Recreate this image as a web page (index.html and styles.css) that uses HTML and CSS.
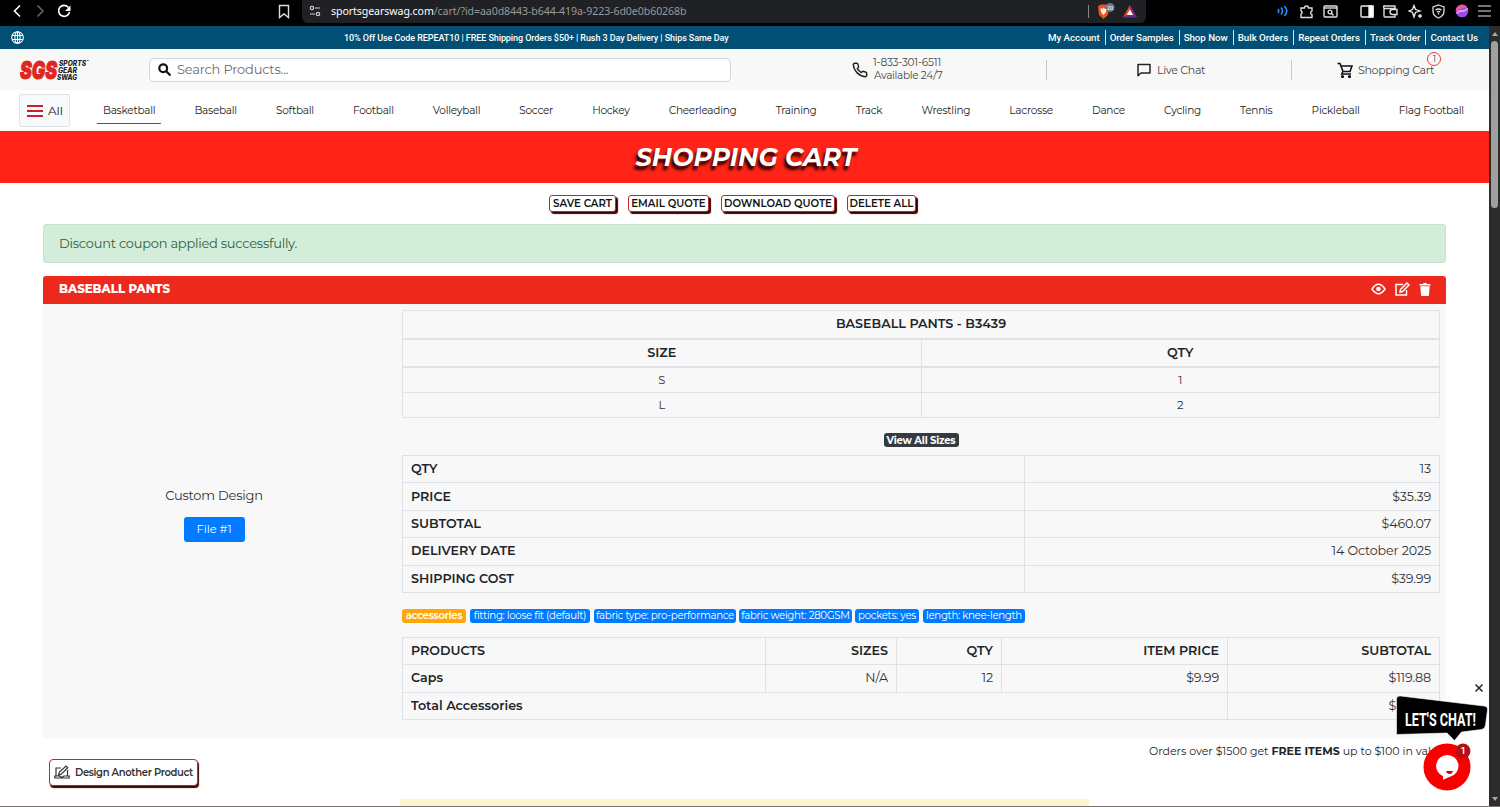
FILE: index.html
```html
<!DOCTYPE html>
<html lang="en">
<head>
  <meta charset="UTF-8">
  <title>Shopping Cart - Sports Gear Swag</title>
  <meta name="viewport" content="width=device-width, initial-scale=1.0">
  <link rel="stylesheet" href="styles.css">
</head>
<body>
  <!-- browser bar -->
  <div class="browser">
    <div class="browser-nav">
      <svg width="64" height="16" viewBox="0 0 64 16" fill="none" stroke="#fff" stroke-width="1.6"><path d="M11 2.500L5.500 8l5.500 5.500"/><path stroke="#666" d="M28.500 2.500L34 8 28.500 13.500"/><path d="M59.500 4.500A5.500 5.500 0 1 0 60.500 9"/><path fill="#fff" stroke="none" d="M61.500 2.500v5.500H56z"/></svg>
    </div>
    <svg class="bookmark" width="12" height="15" viewBox="0 0 12 15" fill="none" stroke="#ddd" stroke-width="1.400"><path d="M1.500 1.500h9v12L6 10l-4.500 3.500z"/></svg>
    <div class="url-bar">
      <svg width="12" height="12" viewBox="0 0 12 12" fill="none" stroke="#ccc" stroke-width="1.200"><circle cx="3" cy="3" r="1.700"/><path d="M6 3h5M1 9h5"/><circle cx="9" cy="9" r="1.700"/></svg>
      <span class="url"><b>sportsgearswag.com</b>/cart/?id=aa0d8443-b644-419a-9223-6d0e0b60268b</span>
      <span class="url-sep"></span>
      <svg class="shield" width="20" height="18" viewBox="0 0 20 18"><path fill="#f4501e" d="M2 4l3-1.500h5L13 4l-1 9-4.500 4L3 13z"/><path fill="#fff" d="M4.500 6l2 1 1-1.500L9 7l2-1-1 4-2.500 3L5 10z"/><circle cx="14" cy="5.500" r="4.500" fill="#70757d"/><text x="14" y="8" class="shield-count">20</text></svg>
      <svg width="14" height="13" viewBox="0 0 14 13"><path fill="#f04a28" d="M7 0L0 12.500 7 8z"/><path fill="#9e1f63" d="M7 0l7 12.500L7 8z"/><path fill="#662d91" d="M0 12.500h14L7 8z"/><path fill="#fff" d="M7 4.500L3.800 10h6.400z"/></svg>
    </div>
    <div class="browser-tools">
      <svg width="12" height="12" viewBox="0 0 12 12" fill="none" stroke="#1d8cf5" stroke-width="1.700"><path d="M1 4q1.500 2 0 4M4 2.500q3 3.500 0 7M7.500 1q4.500 5 0 10"/></svg>
      <svg width="15" height="15" viewBox="0 0 15 15" fill="none" stroke="#ddd" stroke-width="1.400"><path d="M2 4h3.500a2 2 0 1 1 4 0H13v3a1.800 1.800 0 0 0 0 3.500v3H2v-3.300a1.700 1.700 0 0 0 0-3.200z"/></svg>
      <svg width="15" height="13" viewBox="0 0 15 13" fill="none" stroke="#ddd" stroke-width="1.400"><rect x="1" y="1" width="13" height="11" rx="1"/><path d="M1 3h13"/><circle cx="7" cy="7" r="1.900"/><path d="M8.500 8.500l2 2"/></svg>
      <svg class="panel" width="14" height="13" viewBox="0 0 14 13" fill="none" stroke="#eee" stroke-width="1.400"><rect x="1" y="1" width="12" height="11" rx="1"/><path fill="#fff" d="M9 1h4v11H9z"/></svg>
      <svg width="15" height="13" viewBox="0 0 15 13" fill="none" stroke="#ddd" stroke-width="1.400"><path d="M12 4V1H2a1 1 0 0 0-1 2v8q0 1 1 1h10V9.500M1 3.500h12M14 4.500H9.500a2.400 2.400 0 0 0 0 5H14z"/></svg>
      <svg width="15" height="15" viewBox="0 0 15 15" fill="none" stroke="#eee" stroke-width="1.300"><path d="M6 1.500l1.500 4L12 7l-4.500 1.500L6 13 4.500 8.500 1 7l3.500-1.500z"/><path d="M12 10v4M10 12h4"/></svg>
      <svg width="13" height="15" viewBox="0 0 13 15" fill="none" stroke="#ddd" stroke-width="1.300"><path d="M6.500 1L12 3v4.500q0 4-5.500 6.500Q1 11.500 1 7.500V3z"/><path d="M3.500 6q3-2 6 0M4.800 8q1.700-1 3.400 0M6.500 9v1.500"/></svg>
      <svg width="14" height="14" viewBox="0 0 14 14"><circle cx="7" cy="7" r="6.300" fill="#9c4bea"/><path fill="#f0559a" d="M1 5A6.300 6.300 0 0 1 12 3Q7 4 1 8z"/><path d="M1.500 9.500Q5 6 7 7t5.500-2.500" stroke="#fff" stroke-width="1" fill="none"/></svg>
      <svg width="13" height="12" viewBox="0 0 13 12" stroke="#999" stroke-width="1.300"><path d="M0 1h13M0 6h13M0 11h13"/></svg>
    </div>
  </div>

  <div class="window">
    <div class="page">
      <div class="topbar">
        <svg class="globe" width="13" height="13" viewBox="0 0 13 13" fill="none" stroke="#fff" stroke-width="1.100"><circle cx="6.500" cy="6.500" r="5.800"/><ellipse cx="6.500" cy="6.500" rx="2.600" ry="5.800"/><path d="M6.500 .7v11.600M1.200 4.500h10.600M1.200 8.500h10.600"/></svg>
        <div class="promo">10% Off Use Code REPEAT10 | FREE Shipping Orders $50+ | Rush 3 Day Delivery | Ships Same Day</div>
        <div class="top-links">
          <a>My Account</a><a>Order Samples</a><a>Shop Now</a><a>Bulk Orders</a><a>Repeat Orders</a><a>Track Order</a><a>Contact Us</a>
        </div>
      </div>

      <header class="header">
        <svg class="logo" width="74" height="26" viewBox="0 0 74 26">
          <text class="logo-sgs" x="1" y="22" textLength="37" lengthAdjust="spacingAndGlyphs">SGS</text>
          <g class="logo-words"><text x="40" y="9" textLength="27" lengthAdjust="spacingAndGlyphs">SPORTS</text><text x="39" y="16" textLength="19" lengthAdjust="spacingAndGlyphs">GEAR</text><text x="38" y="23" textLength="20" lengthAdjust="spacingAndGlyphs">SWAG</text><text class="tm" x="67" y="6">™</text></g>
        </svg>
        <div class="search">
          <svg width="13" height="13" viewBox="0 0 13 13" fill="none" stroke="#111" stroke-width="2.200"><circle cx="5.200" cy="5.200" r="3.900"/><path d="M8 8l4.500 4.500"/></svg>
          <span>Search Products...</span>
        </div>
        <div class="contact">
          <svg width="16" height="16" viewBox="0 0 24 24" fill="none" stroke="#222" stroke-width="2.200" stroke-linejoin="round"><path d="M22 17v3a2 2 0 0 1-2.200 2A19.800 19.800 0 0 1 2 4.200 2 2 0 0 1 4 2h3a2 2 0 0 1 2 1.700q.3 1.500.8 2.800a2 2 0 0 1-.5 2.100L8 9.900a16 16 0 0 0 6 6l1.300-1.300a2 2 0 0 1 2.100-.4q1.300.5 2.800.7A2 2 0 0 1 22 17z"/></svg>
          <p>1-833-301-6511<br><span>Available 24/7</span></p>
        </div>
        <div class="chat-link">
          <svg width="14" height="14" viewBox="0 0 14 14" fill="none" stroke="#222" stroke-width="1.500" stroke-linejoin="round"><path d="M1 1.500h12v8.500H4L1 12.800z"/></svg>
          <span>Live Chat</span>
        </div>
        <div class="cart-link">
          <svg width="16" height="16" viewBox="0 0 16 16" fill="none" stroke="#111" stroke-width="1.600"><path d="M.5 1.500H3L6 9.500h7L15 4H4M6 9.500L4.700 12H14"/><circle cx="5.500" cy="14.500" r=".8" fill="#111"/><circle cx="12.500" cy="14.500" r=".8" fill="#111"/></svg>
          <span>Shopping Cart</span>
          <i class="cart-count">1</i>
        </div>
      </header>

      <nav class="nav">
        <div class="all-btn"><svg width="16" height="12" viewBox="0 0 16 12" stroke="#c8202c" stroke-width="2"><path d="M0 1h16M0 6h16M0 11h16"/></svg>All</div>
        <div class="nav-list">
          <a class="active">Basketball</a><a>Baseball</a><a>Softball</a><a>Football</a><a>Volleyball</a><a>Soccer</a><a>Hockey</a><a>Cheerleading</a><a>Training</a><a>Track</a><a>Wrestling</a><a>Lacrosse</a><a>Dance</a><a>Cycling</a><a>Tennis</a><a>Pickleball</a><a>Flag Football</a>
        </div>
      </nav>

      <h1 class="banner"><span>SHOPPING CART</span></h1>

      <div class="actions">
        <button class="w-save">SAVE CART</button>
        <button class="w-email">EMAIL QUOTE</button>
        <button class="w-download">DOWNLOAD QUOTE</button>
        <button class="w-delete">DELETE ALL</button>
      </div>

      <main class="container">
        <div class="alert">Discount coupon applied successfully.</div>

        <section class="card">
          <div class="card-header">
            <h2>BASEBALL PANTS</h2>
            <div class="card-icons">
              <svg width="15" height="12" viewBox="0 0 15 12" fill="none" stroke="#fff" stroke-width="1.500"><path d="M1 6q6.500-9.500 13 0-6.500 9.500-13 0z"/><circle cx="7.500" cy="6" r="2.300" fill="#fff" stroke="none"/></svg>
              <svg width="15" height="14" viewBox="0 0 15 14" fill="none" stroke="#fff" stroke-width="1.500"><path d="M8 2.500H1V13h10.500V8"/><path d="M5.500 7.500L12 1l2 2-6.500 6.500-2.500.5z"/></svg>
              <svg width="12" height="13" viewBox="0 0 12 13" fill="#fff"><path d="M.5 1H4l.5-1h3L8 1h3.500v1.500H.5zM1.300 3.300h9.400L10 12q0 1-1 1H3q-1 0-1-1z"/></svg>
            </div>
          </div>
          <div class="card-body">
            <div class="design">
              <p>Custom Design</p>
              <button>File #1</button>
            </div>
            <div class="details">
              <table class="sizes">
                <tr class="heavy"><th colspan="2">BASEBALL PANTS - B3439</th></tr>
                <tr class="heavy"><th>SIZE</th><th>QTY</th></tr>
                <tr><td>S</td><td>1</td></tr>
                <tr><td>L</td><td>2</td></tr>
              </table>
              <div class="view-all"><span>View All Sizes</span></div>
              <table class="summary">
                <tr><th>QTY</th><td>13</td></tr>
                <tr><th>PRICE</th><td>$35.39</td></tr>
                <tr><th>SUBTOTAL</th><td>$460.07</td></tr>
                <tr><th>DELIVERY DATE</th><td>14 October 2025</td></tr>
                <tr><th>SHIPPING COST</th><td>$39.99</td></tr>
              </table>
              <div class="badges">
                <span class="orange w-acc">accessories</span>
                <span class="w-fit">fitting: loose fit (default)</span>
                <span class="w-type">fabric type: pro-performance</span>
                <span class="w-weight">fabric weight: 280GSM</span>
                <span class="w-pockets">pockets: yes</span>
                <span class="w-length">length: knee-length</span>
              </div>
              <table class="products">
                <colgroup><col class="c1"><col class="c2"><col class="c3"><col class="c4"><col class="c5"></colgroup>
                <tr><th>PRODUCTS</th><th>SIZES</th><th>QTY</th><th>ITEM PRICE</th><th>SUBTOTAL</th></tr>
                <tr><th>Caps</th><td>N/A</td><td>12</td><td>$9.99</td><td>$119.88</td></tr>
                <tr><th colspan="4">Total Accessories</th><td>$119.88</td></tr>
              </table>
            </div>
          </div>
        </section>

        <div class="below">
          <button class="another">
            <svg width="16" height="14" viewBox="0 0 16 14" fill="none" stroke="#333" stroke-width="1.200"><path d="M7 3H2v8M13.500 5v6M.8 11h5l1 1h2l1-1h5.400v2H.8zM4.500 10l1-3L12 1l1.800 1.800L7.500 9z"/></svg>
            Design Another Product
          </button>
          <p class="offer">Orders over $1500 get <b>FREE ITEMS</b> up to $100 in value</p>
        </div>
        <div class="notice"></div>
      </main>

      <div class="chat">
        <svg width="94" height="112" viewBox="0 0 94 112">
          <path d="M80.500 5.500l7 7m0-7l-7 7" stroke="#222" stroke-width="1.500"/>
          <path fill="#000" stroke="#fff" stroke-width=".6" d="M1.500 20q0-3.500 4-3L89 27q4 .5 3.500 4l-2 15q-.5 4-4 4.500l-20 2.500-7 8.500L52 54l-50.500 1.500z"/>
          <text class="chat-text" x="10" y="46.500" textLength="71" lengthAdjust="spacingAndGlyphs">LET'S CHAT!</text>
          <circle cx="52" cy="88" r="23.500" fill="#f80000"/>
          <path fill="#fff" d="M52 76a11 11 0 0 1 3 21.700l-7 3v-3.500A11 11 0 0 1 52 76z"/>
          <path fill="#d00" d="M51 92h7q-.8 3-3.500 3T51 92z"/>
          <circle cx="68" cy="72" r="7.500" fill="#b51218"/>
          <text class="chat-count" x="68" y="75">1</text>
        </svg>
      </div>
    </div>

    <div class="scrollbar">
      <span class="arrow-up"></span>
      <span class="thumb"></span>
      <span class="arrow-down"></span>
    </div>
  </div>
  <div class="window-edge"></div>
</body>
</html>
```
FILE: styles.css
```css
* {
  box-sizing: border-box;
}
body {
  margin: 0;
  width: 1500px;
  height: 807px;
  overflow: hidden;
  display: flex;
  flex-direction: column;
  background: #fff;
  color: #212529;
  font-family: Montserrat, Inter, sans-serif;
}
h1, h2, p {
  margin: 0;
}
svg {
  display: block;
  flex: none;
}
button {
  font-family: inherit;
  padding: 0;
  white-space: nowrap;
}

/* browser bar */
.browser {
  height: 26px;
  flex: none;
  background: #000;
  display: flex;
  align-items: center;
  padding: 0 9px 4px;
}
.browser-nav {
  width: 269px;
}
.url-bar {
  margin-left: 12px;
  width: 844px;
  height: 23px;
  background: #202124;
  border-radius: 0 0 6px 6px;
  display: flex;
  align-items: center;
  padding: 0 9px 0 7px;
}
.url {
  margin-left: 10px;
  font: 10.600px "Noto Sans", sans-serif;
  color: #999;
  letter-spacing: -0.08px;
}
.url b {
  color: #fff;
  font-weight: 400;
}
.url-sep {
  width: 1px;
  height: 13px;
  background: #888;
  margin-left: auto;
}
.shield {
  margin: 0 7px 0 7px;
}
.shield-count {
  font: 6px Roboto, sans-serif;
  fill: #fff;
  text-anchor: middle;
}
.browser-tools {
  margin-left: auto;
  display: flex;
  align-items: center;
  gap: 9.500px;
}
.browser-tools .panel {
  margin-left: 12px;
}

.window {
  flex: 1;
  display: flex;
  min-height: 0;
}
.page {
  width: 1489px;
  position: relative;
  overflow: hidden;
}

/* top bar */
.topbar {
  height: 23px;
  background: #014f74;
  color: #fff;
  display: flex;
  align-items: center;
  padding: 0 11px;
  font: 500 9px Roboto, sans-serif;
}
.promo {
  margin-left: 320px;
  letter-spacing: -0.080px;
  white-space: nowrap;
}
.top-links {
  margin-left: auto;
  display: flex;
  font-size: 9.750px;
  letter-spacing: -0.04px;
}
.top-links a {
  line-height: 15px;
  padding: 0 5px 0 4px;
  border-right: 1px solid #d8e4ea;
  white-space: nowrap;
}
.top-links a:last-child {
  border: 0;
  padding-right: 0;
}

/* header */
.header {
  height: 41px;
  background: #f8f8f8;
  display: flex;
  align-items: center;
  padding-left: 19px;
  color: #484848;
  font-size: 11px;
}
.logo {
  overflow: visible;
}
.logo-sgs {
  font: italic 900 25px Inter, sans-serif;
  fill: #e1251f;
  stroke: #e1251f;
  stroke-width: 1px;
}
.logo-words {
  font: italic 800 7px Inter, sans-serif;
  fill: #222;
}
.logo-words .tm {
  font-size: 4px;
}
.search {
  margin-left: 56px;
  width: 582px;
  height: 24px;
  background: #fff;
  border: 1px solid #d4d4de;
  border-radius: 5px;
  display: flex;
  align-items: center;
  gap: 6px;
  padding: 0 0 1px 8px;
  font-size: 13px;
  letter-spacing: -0.2px;
  color: #6c6c74;
}
.contact {
  margin-left: 121px;
  width: 195px;
  height: 20px;
  border-right: 1px solid #c8c8c8;
  display: flex;
  align-items: center;
  gap: 5px;
  font-size: 10.500px;
  letter-spacing: -0.2px;
  line-height: 13px;
}
.contact p {
  margin-top: -1px;
}
.contact span {
  padding-left: 1px;
  letter-spacing: -0.3px;
}
.chat-link {
  width: 245px;
  height: 20px;
  border-right: 1px solid #c8c8c8;
  display: flex;
  align-items: center;
  gap: 6px;
  padding-left: 90px;
  letter-spacing: -0.3px;
}
.cart-link {
  position: relative;
  display: flex;
  align-items: center;
  gap: 5px;
  margin-left: 45px;
  letter-spacing: -0.3px;
}
.cart-count {
  position: absolute;
  right: -7px;
  top: -10px;
  width: 14px;
  height: 14px;
  border: 1px solid #ee3a30;
  border-radius: 50%;
  font-style: normal;
  font-size: 9px;
  line-height: 12px;
  text-align: center;
}

/* categories */
.nav {
  height: 41px;
  display: flex;
  align-items: center;
  padding: 0 19px;
}
.all-btn {
  width: 51px;
  height: 33px;
  background: #f8f9fa;
  border: 1px solid #dfe2e8;
  border-radius: 2px;
  display: flex;
  align-items: center;
  gap: 5px;
  padding-left: 7px;
  font-size: 12px;
  color: #222;
}
.nav-list {
  flex: 1;
  margin-left: 27px;
  display: flex;
  justify-content: space-between;
}
.nav-list a {
  padding: 0 6px;
  height: 27px;
  line-height: 28px;
  font-size: 10.500px;
  color: #222;
  letter-spacing: -0.25px;
  white-space: nowrap;
}
.nav-list .active {
  border-bottom: 1px solid #555;
}

.banner {
  height: 52px;
  background: #ff2318;
  color: #fff;
  text-align: center;
  font-size: 25.200px;
  line-height: 52px;
  font-weight: 700;
  font-style: italic;
  text-shadow: -2px 4px 3px #200;
}
.banner span {
  padding-left: 3px;
}

.actions {
  display: flex;
  padding-left: 549px;
  padding-top: 12px;
  gap: 12px;
  height: 41px;
}
.actions button {
  height: 17px;
  border: 1px solid #b92a30;
  border-radius: 3px;
  background: #fff;
  box-shadow: 2px 2px 1px #3a0000;
  font-size: 10.200px;
  line-height: 14px;
  font-weight: 600;
  color: #111;
}
.w-save { width: 67px; }
.w-email { width: 81px; }
.w-download { width: 114px; }
.w-delete { width: 69px; }

.container {
  margin: 0 43px;
}
.alert {
  height: 39px;
  background: #d4edda;
  border: 1px solid #c3e6cb;
  border-radius: 3px;
  color: #2c643e;
  font-size: 13px;
  letter-spacing: -0.25px;
  line-height: 36px;
  padding-left: 15px;
}

/* cart item */
.card {
  margin-top: 13px;
}
.card-header {
  height: 28px;
  background: #ed281d;
  border-radius: 3px 3px 0 0;
  color: #fff;
  display: flex;
  align-items: center;
  justify-content: space-between;
  padding: 0 15px 2px 16px;
}
.card-header h2 {
  font-size: 11.700px;
  font-weight: 800;
}
.card-icons {
  display: flex;
  align-items: center;
  gap: 9px;
}
.card-body {
  height: 434px;
  background: #f8f8f8;
  display: flex;
  padding: 6px 6px 0 0;
}
.design {
  width: 359px;
  padding: 177px 17px 0 0;
  text-align: center;
  font-size: 13px;
  letter-spacing: -0.22px;
  color: #333;
}
.design button {
  margin-top: 14px;
  width: 61px;
  height: 25px;
  background: #007bff;
  border: 0;
  border-radius: 3px;
  color: #fff;
  font-size: 11.500px;
  line-height: 24px;
  letter-spacing: -0.1px;
  padding-bottom: 2px;
}
.details {
  width: 1038px;
}
table {
  width: 1038px;
  border-collapse: collapse;
  table-layout: fixed;
  font-size: 12.700px;
}
th, td {
  border: 1px solid #dee2e6;
  padding: 0 8px;
  line-height: 16px;
}
th {
  font-weight: 600;
}
td {
  color: #333;
  letter-spacing: -0.15px;
}
.sizes {
  height: 108px;
  text-align: center;
}
.sizes td {
  font-size: 11.500px;
  height: 25px;
}
.sizes .heavy th {
  border-bottom-width: 2px;
  height: 28px;
}
.view-all {
  height: 37px;
  padding-top: 15px;
  display: flex;
  justify-content: center;
}
.view-all span {
  width: 75px;
  height: 14px;
  background: #343a40;
  border-radius: 3px;
  color: #fff;
  font-size: 10px;
  letter-spacing: -0.2px;
  line-height: 15px;
  font-weight: 700;
  text-align: center;
  white-space: nowrap;
}
.summary {
  height: 138px;
}
.summary th {
  width: 60%;
  text-align: left;
}
.summary td {
  text-align: right;
}
.badges {
  height: 44px;
  padding-top: 16px;
  display: flex;
  gap: 4px;
}
.badges span {
  height: 14px;
  background: #007bff;
  border-radius: 3px;
  color: #fff;
  font-size: 10.200px;
  letter-spacing: -0.3px;
  line-height: 13px;
  text-align: center;
  white-space: nowrap;
}
.badges .orange {
  background: #ffa60a;
  font-weight: 600;
}
.w-acc { width: 64px; }
.w-fit { width: 120px; }
.w-type { width: 142px; }
.w-weight { width: 113px; }
.badges .w-weight { margin-left: -1px; }
.w-pockets { width: 64px; }
.badges .w-pockets { margin-left: -1px; }
.w-length { width: 102px; }
.products {
  height: 83px;
}
.products th, .products td {
  text-align: right;
}
.products th:first-child {
  text-align: left;
}
.c1 { width: 363px; }
.c2 { width: 131px; }
.c3 { width: 105px; }
.c4 { width: 226px; }
.c5 { width: 212px; }

.below {
  height: 61px;
  display: flex;
  justify-content: space-between;
  padding-left: 6px;
}
.another {
  margin-top: 21px;
  width: 149px;
  height: 27px;
  border: 1px solid #c8252b;
  border-radius: 4px;
  background: #fff;
  box-shadow: 1px 2px 1px #3a0000;
  display: flex;
  align-items: center;
  gap: 5px;
  padding: 0 0 1px 4px;
  font-size: 10px;
  letter-spacing: -0.35px;
  font-weight: 600;
  color: #333;
}
.offer {
  font-size: 11px;
  line-height: 26px;
  padding-right: 1px;
}
.notice {
  margin-left: 357px;
  width: 689px;
  height: 30px;
  background: #fff3cd;
}

/* chat widget floats over the page */
.chat {
  position: absolute;
  right: 0;
  bottom: 15px;
}
.chat-text {
  font: 700 19px Roboto, sans-serif;
  fill: #fff;
}
.chat-count {
  font: 600 9px Inter, sans-serif;
  fill: #fff;
  text-anchor: middle;
}

.scrollbar {
  width: 11px;
  background: #2c2c2c;
  display: flex;
  flex-direction: column;
  align-items: center;
  padding: 6px 0 5px;
}
.arrow-up, .arrow-down {
  border: 3.500px solid transparent;
}
.arrow-up {
  border-bottom: 4px solid #aaa;
  border-top: 0;
}
.thumb {
  margin-top: 5px;
  width: 7px;
  height: 167px;
  background: #9f9f9f;
  border-radius: 4px;
}
.arrow-down {
  margin-top: auto;
  border-top: 4px solid #aaa;
  border-bottom: 0;
}
.window-edge {
  height: 1px;
  flex: none;
  background: #757171;
}
```
